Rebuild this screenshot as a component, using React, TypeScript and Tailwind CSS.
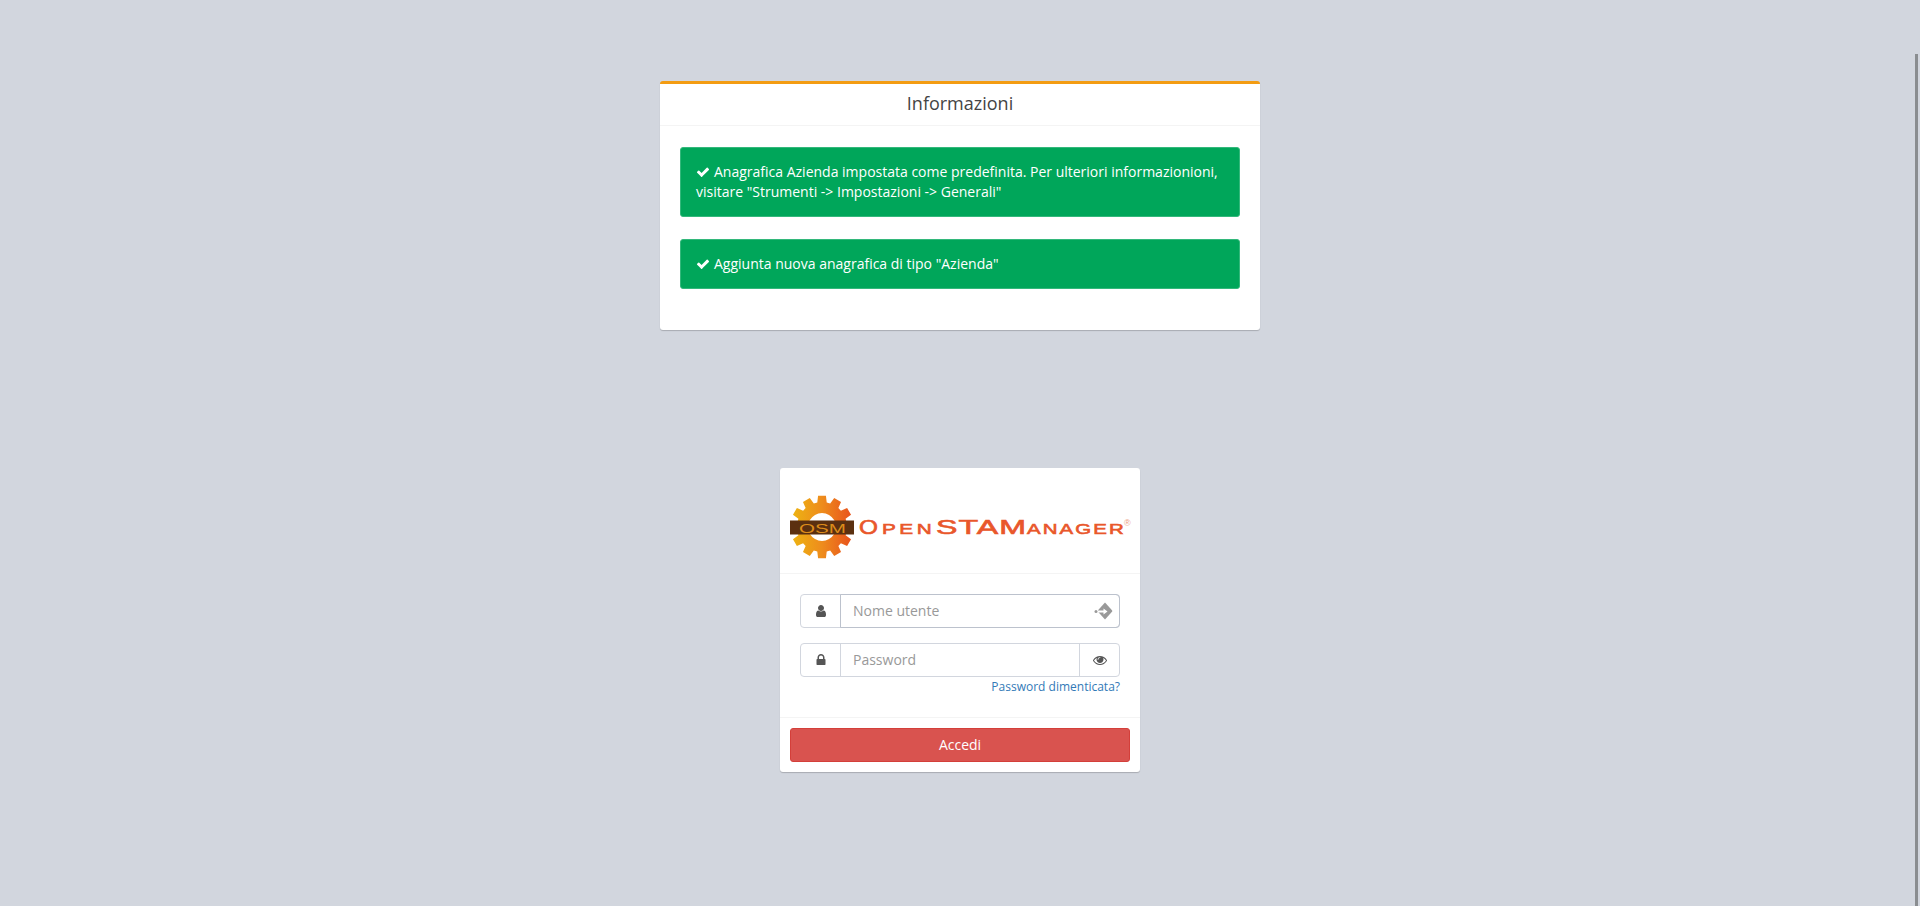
import React from "react";

// Font Awesome 4 glyphs, 1792 grid
const icons = {
  check: "M1671 566q0 40-28 68l-724 724-136 136q-28 28-68 28t-68-28l-136-136-362-362q-28-28-28-68t28-68l136-136q28-28 68-28t68 28l294 295 656-657q28-28 68-28t68 28l136 136q28 28 28 68z",
  user: "M1536 1399q0 109-62.5 187t-150.5 78h-854q-88 0-150.5-78t-62.5-187q0-85 8.5-160.5t31.5-152 58.5-131 94-89 134.5-34.5q131 128 313 128t313-128q76 0 134.5 34.5t94 89 58.5 131 31.5 152 8.5 160.5zm-256-887q0 159-112.5 271.5t-271.5 112.5-271.5-112.5-112.5-271.5 112.5-271.5 271.5-112.5 271.5 112.5 112.5 271.5z",
  lock: "M640 768h512v-192q0-106-75-181t-181-75-181 75-75 181v192zm832 96v576q0 40-28 68t-68 28h-960q-40 0-68-28t-28-68v-576q0-40 28-68t68-28h32v-192q0-184 132-316t316-132 316 132 132 316v192h32q40 0 68 28t28 68z",
  eye: "M1664 960q-152-236-381-353 61 104 61 225 0 185-131.5 316.5t-316.5 131.5-316.5-131.5-131.5-316.5q0-121 61-225-229 117-381 353 133 205 333.5 326.5t434.5 121.5 434.5-121.5 333.5-326.5zm-720-384q0-20-14-34t-34-14q-125 0-214.5 89.5t-89.5 214.5q0 20 14 34t34 14 34-14 14-34q0-86 61-147t147-61q20 0 34-14t14-34zm848 384q0 34-20 69-140 230-376.5 368.5t-499.5 138.5-499.5-139-376.5-368q-20-35-20-69t20-69q140-229 376.5-368t499.5-139 499.5 139 376.5 368q20 35 20 69z",
};

const Fa = ({ d, size, className }: { d: string; size: number; className?: string }) => (
  <svg width={size} height={size} viewBox="0 0 1792 1792" fill="currentColor" className={className}>
    <path d={d} />
  </svg>
);

// gear outline with 12 teeth around (32, 37)
const gearPath = () => {
  const pts: string[] = [];
  const pt = (r: number, a: number) =>
    `${(32 + r * Math.cos(a)).toFixed(2)} ${(37 + r * Math.sin(a)).toFixed(2)}`;
  for (let i = 0; i < 12; i++) {
    const a = (i * Math.PI) / 6 - Math.PI / 2;
    pts.push(pt(25, a - 0.19), pt(31.5, a - 0.125), pt(31.5, a + 0.125), pt(25, a + 0.19));
  }
  return `M${pts.join("L")}ZM32 23a14 14 0 1 0 .01 0Z`;
};

// wordmark pieces: stretched wide, the logo is an extended face
const Word = ({ x, sx, ls, big, children }: { x: number; sx: number; ls: number; big?: boolean; children: string }) => (
  <text
    transform={`translate(${x} 44) scale(${sx} 1)`}
    letterSpacing={ls}
    fontFamily="'Liberation Sans', sans-serif"
    fontSize={big ? 19.5 : 14.6}
    stroke="#e9572b"
    strokeWidth="0.6"
    fill="#e9572b"
  >
    {children}
  </text>
);

const Logo = () => (
  <svg width="345" height="72" viewBox="0 0 345 72" className="block">
    <defs>
      <linearGradient id="gear" x1="0" y1="0" x2="1" y2="0">
        <stop offset="0" stopColor="#edb512" />
        <stop offset="0.5" stopColor="#ee8c1c" />
        <stop offset="1" stopColor="#e84f1d" />
      </linearGradient>
    </defs>
    <path fill="url(#gear)" fillRule="evenodd" d={gearPath()} />
    <rect x="0" y="30.5" width="64" height="14" fill="#5b3010" />
    <text
      x="9"
      y="42.5"
      textLength="47"
      lengthAdjust="spacingAndGlyphs"
      fontFamily="'Liberation Sans', sans-serif"
      fontSize="13"
      fill="#dd8c1a"
    >
      OSM
    </text>
    <Word x={69} sx={1.25} ls={0} big>O</Word>
    <Word x={92} sx={1.42} ls={2.5}>PEN</Word>
    <Word x={146} sx={1.65} ls={0.6} big>STAM</Word>
    <Word x={237} sx={1.4} ls={1.5}>ANAGER</Word>
    <text x="334" y="36" fontFamily="'Liberation Sans', sans-serif" fontSize="9" fill="#eda27f">
      ®
    </text>
  </svg>
);

const Alert = ({ children, h }: { children: React.ReactNode; h: string }) => (
  <div className={`${h} bg-[#00a65a] border border-[#33b87b] rounded-[3px] px-[15px] pt-[14px] text-white text-sm leading-[20px]`}>
    {children}
  </div>
);

const Check = () => <Fa d={icons.check} size={14} className="inline-block mr-[4px] align-[-2px]" />;

export default function App() {
  return (
    <div className="relative min-h-[906px] bg-[#d2d6de] pt-[81px] font-['Open_Sans',sans-serif] text-[#333]">
      {/* scrollbar overlay */}
      <div className="absolute right-[2px] top-[54px] bottom-0 w-[3px] bg-[#8a8d90]" />

      <div className="w-[600px] h-[249px] mx-auto bg-white rounded-[3px] border-t-[3px] border-[#f39c12] shadow-[0_1px_1px_rgba(0,0,0,0.2)]">
        <div className="h-[42px] pb-[3px] flex items-center justify-center border-b border-[#f4f4f4] text-lg text-[#444]">
          Informazioni
        </div>
        <div className="px-[20px] pt-[21px] flex flex-col gap-[22px]">
          <Alert h="h-[70px]">
            <Check />
            Anagrafica Azienda impostata come predefinita. Per ulteriori informazionioni, visitare "Strumenti -&gt; Impostazioni -&gt; Generali"
          </Alert>
          <Alert h="h-[50px]">
            <Check />
            Aggiunta nuova anagrafica di tipo "Azienda"
          </Alert>
        </div>
      </div>

      <div className="w-[360px] h-[304px] mt-[138px] mx-auto bg-white rounded-[3px] shadow-[0_1px_1px_rgba(0,0,0,0.2)] flex flex-col">
        <div className="h-[106px] border-b border-[#f4f4f4] pt-[22px] pl-[10px]">
          <Logo />
        </div>
        <div className="h-[144px] border-b border-[#f4f4f4] px-[20px] pt-[20px] text-sm">
          <div className="h-[34px] flex border border-[#d2d6de] rounded-[4px]">
            <span className="w-[39px] flex items-center justify-center text-[#555]">
              <Fa d={icons.user} size={14} />
            </span>
            <span className="flex-1 flex items-center justify-between pl-[12px] pr-[6px] text-[#999] border border-[#bcc2cd] -my-px -mr-px rounded-r-[4px]">
              Nome utente
              <svg width="20" height="20" viewBox="0 0 20 20">
                <path fill="#999" d="M12 1.5 19 9.2a1.2 1.2 0 0 1 0 1.6L12 18.5 5 10.8V9.2z" />
                <path fill="#fff" d="M4 9.4h6.5V7.4l4 3-4 3v-2H4z" />
                <circle cx="3" cy="10.4" r="1.5" fill="#999" />
              </svg>
            </span>
          </div>
          <div className="h-[34px] mt-[15px] flex border border-[#d2d6de] rounded-[4px]">
            <span className="w-[40px] flex items-center justify-center text-[#555] border-r border-[#d2d6de]">
              <Fa d={icons.lock} size={14} />
            </span>
            <span className="w-[239px] flex items-center pl-[12px] text-[#999] border-r border-[#d2d6de]">Password</span>
            <span className="flex-1 flex items-center justify-center text-[#555]">
              <Fa d={icons.eye} size={14} />
            </span>
          </div>
          <div className="text-right text-xs leading-[18px] mt-[1px] text-[#337ab7]">Password dimenticata?</div>
        </div>
        <div className="px-[10px] pt-[10px]">
          <div className="h-[34px] flex items-center justify-center rounded-[3px] bg-[#d9534f] border border-[#d43f3a] text-white text-sm">
            Accedi
          </div>
        </div>
      </div>
    </div>
  );
}
